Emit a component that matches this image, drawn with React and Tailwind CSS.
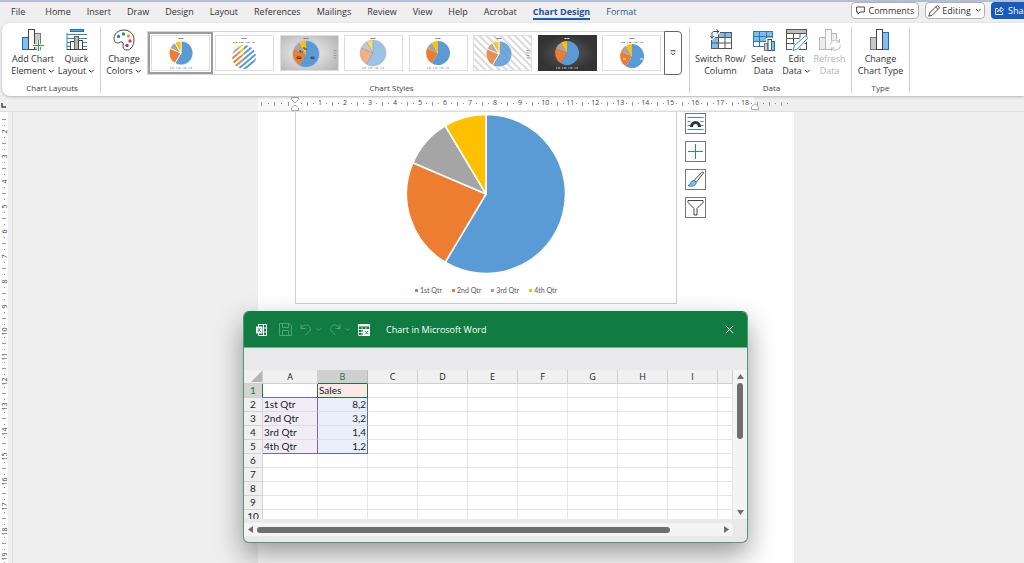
import clsx from "clsx";

const COLORS = ["#5b9bd5", "#ed7d31", "#a5a5a5", "#ffc000"];

const ROWS = [
  { label: "1st Qtr", value: 8.2 },
  { label: "2nd Qtr", value: 3.2 },
  { label: "3rd Qtr", value: 1.4 },
  { label: "4th Qtr", value: 1.2 },
];

const TABS = [
  "File", "Home", "Insert", "Draw", "Design", "Layout", "References",
  "Mailings", "Review", "View", "Help", "Acrobat", "Chart Design", "Format",
];

const COLUMNS = ["A", "B", "C", "D", "E", "F", "G", "H", "I", ""];

function getSlices(cx, cy, r) {
  const total = ROWS.reduce((sum, row) => sum + row.value, 0);
  let angle = 0;
  return ROWS.map((row) => {
    const start = angle;
    angle += (row.value / total) * Math.PI * 2;
    const large = angle - start > Math.PI ? 1 : 0;
    const x1 = cx + r * Math.sin(start);
    const y1 = cy - r * Math.cos(start);
    const x2 = cx + r * Math.sin(angle);
    const y2 = cy - r * Math.cos(angle);
    return `M${cx} ${cy}L${x1} ${y1}A${r} ${r} 0 ${large} 1 ${x2} ${y2}Z`;
  });
}

function Pie({ cx, cy, r, fills = COLORS, stroke = "none", strokeWidth = 1, opacity = 1 }) {
  return getSlices(cx, cy, r).map((d, i) => (
    <path key={i} d={d} fill={fills[i]} stroke={stroke} strokeWidth={strokeWidth} strokeLinejoin="round" opacity={opacity} />
  ));
}

function Chevron() {
  return (
    <svg className="inline-block w-[7px] h-[7px] ml-0.5" viewBox="0 0 7 7" fill="none" stroke="#333" strokeWidth="1">
      <path d="M1 2l2.3 2.3L5.6 2" />
    </svg>
  );
}

/* ---------- Ribbon icons ---------- */

function AddElementIcon() {
  return (
    <svg className="w-[22px] h-[22px]" viewBox="0 0 22 22">
      <rect x="0.5" y="8.5" width="6" height="12" fill="#83beec" stroke="#1e6fb5" />
      <rect x="12.5" y="4.5" width="6" height="16" fill="#c8c8c8" stroke="#7a7a7a" />
      <rect x="6.5" y="0.5" width="6" height="20" fill="#fafafa" stroke="#444" />
      <path d="M16.5 11v11M11 16.5h11" stroke="#fff" strokeWidth="3" />
      <path d="M16.5 11v11M11 16.5h11" stroke="#26a044" strokeWidth="1.2" />
    </svg>
  );
}

function QuickLayoutIcon() {
  return (
    <svg className="w-[22px] h-[22px]" viewBox="0 0 22 22">
      <rect x="4.5" y="0.5" width="13" height="2" fill="#5ba3dc" stroke="#1e6fb5" />
      <path d="M1 5.500h20M1 9.500h20M1 13.500h20M1 17.500h20M1 4v17" stroke="#2f8bb8" fill="none" />
      <rect x="4.5" y="12.5" width="4" height="8" fill="#fff" stroke="#444" />
      <rect x="8.5" y="7.5" width="4" height="13" fill="#b5b5b5" stroke="#666" />
      <rect x="12.5" y="11.5" width="4" height="9" fill="#fff" stroke="#444" />
      <path d="M1 20.500h20" stroke="#444" />
    </svg>
  );
}

function PaletteIcon() {
  return (
    <svg className="w-[22px] h-[22px]" viewBox="0 0 22 22">
      <path
        d="M11 1C5 1 1 5 1 9.500c0 3 1.600 4.500 3.500 4.500 2 0 2.600-1.500 4.300-1 2.400.700 1 3 1.300 5 .200 2 1.700 3 3.900 3 4.200 0 7-5 7-10C21 5 16.500 1 11 1z"
        fill="#fff" stroke="#444" strokeWidth="1"
      />
      <circle cx="5.5" cy="7.5" r="1.7" fill="#2b7fd0" />
      <circle cx="10.5" cy="5" r="1.7" fill="#26a044" />
      <circle cx="15.5" cy="7" r="1.7" fill="#ee9a38" />
      <circle cx="17" cy="12" r="1.7" fill="#d8462e" />
      <circle cx="14" cy="16.5" r="1.7" fill="#7a3fa8" />
    </svg>
  );
}

function SwitchIcon() {
  return (
    <svg className="w-[22px] h-[22px]" viewBox="0 0 22 22">
      <rect x="1.5" y="3.5" width="20" height="16" fill="#fff" stroke="#555" />
      <path d="M8 4h13v4.500H8zM2 8.500h6V19H2z" fill="#7fbdec" />
      <path d="M8.500 3.500v16M15 3.500v16M1.500 8.500h20M1.500 14h20" stroke="#555" fill="none" />
      <path d="M0 0h10v4L2 11H0z" fill="#fff" />
      <path d="M2 9V4.500C2 3.200 2.800 2.500 4 2.500h5M6.500.5l2.500 2-2.500 2.200M.3 7L2 9.300 4 7" stroke="#444" fill="none" />
    </svg>
  );
}

function SelectDataIcon() {
  return (
    <svg className="w-[22px] h-[22px]" viewBox="0 0 22 22">
      <rect x="0.5" y="2.5" width="19" height="15" fill="#7fbdec" stroke="#2f78b4" />
      <path d="M1 13h13v4H1z" fill="#fff" />
      <path d="M6.500 3v15M13.500 3v10M.5 7.500h19M.5 12.500h13" stroke="#2f78b4" />
      <path d="M11 13h2V9h9v13H11z" fill="#fff" />
      <rect x="11.5" y="14.5" width="3.5" height="7" fill="#ccc" stroke="#777" />
      <rect x="15" y="10.5" width="3.5" height="11" fill="#fff" stroke="#444" />
      <rect x="18.5" y="12.5" width="3" height="9" fill="#7fbdec" stroke="#1e6fb5" />
    </svg>
  );
}

function EditDataIcon() {
  return (
    <svg className="w-[22px] h-[22px]" viewBox="0 0 22 22">
      <rect x="0.5" y="0.5" width="20" height="20" fill="#fff" stroke="#555" />
      <rect x="1" y="1" width="19" height="3" fill="#bdbdbd" />
      <path d="M.5 4.500h20M.5 9.500h20M.5 14.500h20M7.500 4.500v16M14 4.500v16" stroke="#555" fill="none" />
      <path d="M7 21.500l1.500-5L18.500 6.500l3.200 3.200L11.500 20z" fill="#fff" stroke="#fff" strokeWidth="2.5" />
      <path d="M7 21.500l1.500-5L19 7.200c1-.8 3.200 1.200 2.300 2.500L11.500 20z" fill="#fff" stroke="#3190d4" />
    </svg>
  );
}

function RefreshIcon() {
  return (
    <svg className="w-[22px] h-[22px]" viewBox="0 0 22 22" stroke="#b8b8b8">
      <rect x="0.5" y="8.5" width="6" height="12" fill="#ececec" />
      <rect x="12.5" y="4.5" width="5" height="13" fill="#ececec" />
      <rect x="6.5" y="0.5" width="6" height="20" fill="#f8f8f8" />
      <circle cx="16.5" cy="16" r="6" fill="#fff" stroke="none" />
      <path d="M11.500 15.500a5 5 0 0 1 9-2.500v-3M20.500 13h-3M21.500 16.500a5 5 0 0 1-9 2.700v3M12.500 19h3" fill="none" />
    </svg>
  );
}

function ChartTypeIcon() {
  return (
    <svg className="w-[22px] h-[22px]" viewBox="0 0 22 22">
      <rect x="1.5" y="8.5" width="6" height="12" fill="#c8c8c8" stroke="#777" />
      <rect x="13.5" y="3.5" width="6" height="17" fill="#83beec" stroke="#1e6fb5" />
      <rect x="7.5" y="0.5" width="6" height="20" fill="#fff" stroke="#444" />
    </svg>
  );
}

function RibbonButton({ icon, lines, menu, disabled, className }) {
  return (
    <button
      type="button"
      disabled={disabled}
      className={clsx("flex flex-col items-center shrink-0 text-[9px] leading-3 whitespace-nowrap", disabled ? "text-[#b4b4b4]" : "text-[#333]", className)}
    >
      <span className="h-6">{icon}</span>
      <span>{lines[0]}</span>
      <span>
        {lines[1]}
        {menu && <Chevron />}
      </span>
    </button>
  );
}

function RibbonGroup({ label, children, className }) {
  return (
    <section className={clsx("flex flex-col shrink-0 border-r border-[#cfcfcf] mt-1 mb-[3px] pt-0.5", className)}>
      <div className="flex flex-1 justify-center">{children}</div>
      <h2 className="text-[8px] leading-[10px] text-center text-[#444]">{label}</h2>
    </section>
  );
}

/* ---------- Chart style gallery ---------- */

const STYLES = [
  { cx: 30, cy: 18, r: 12, stroke: "#fff", legend: "bottom" },
  { cx: 29, cy: 22, r: 12, fills: ["url(#hBlue)", "url(#hOrange)", "url(#hGray)", "url(#hGold)"], legend: "top" },
  { cx: 26, cy: 19, r: 14, bg: "url(#silver)", legend: "right", halo: true },
  { cx: 29, cy: 18, r: 13, opacity: 0.6, outline: true, legend: "bottom" },
  { cx: 29, cy: 18, r: 12, legend: "bottom" },
  { cx: 26, cy: 19, r: 13, bg: "url(#stripes)", stroke: "#fff", opacity: 0.85, legend: "right" },
  { cx: 29, cy: 18, r: 12, bg: "url(#dark)", legend: "bottom", dark: true },
  { cx: 30, cy: 21, r: 12, legend: "top", ticks: true },
];

function GalleryDefs() {
  return (
    <svg className="absolute w-0 h-0" aria-hidden="true">
      <defs>
        {[["hBlue", "#5b9bd5"], ["hOrange", "#ed7d31"], ["hGray", "#a5a5a5"], ["hGold", "#ffc000"]].map(([id, color]) => (
          <pattern key={id} id={id} width="4" height="4" patternUnits="userSpaceOnUse" patternTransform="rotate(-40)">
            <rect width="4" height="4" fill="#fff" />
            <rect width="4" height="2" fill={color} />
          </pattern>
        ))}
        <pattern id="stripes" width="5" height="5" patternUnits="userSpaceOnUse" patternTransform="rotate(45)">
          <rect width="5" height="5" fill="#fff" />
          <rect width="5" height="2" fill="#d9d9d9" />
        </pattern>
        <radialGradient id="silver" cx="0.45" cy="0.5" r="0.65">
          <stop offset="0" stopColor="#f4f4f4" />
          <stop offset="1" stopColor="#b8b8b8" />
        </radialGradient>
        <radialGradient id="dark">
          <stop offset="0" stopColor="#5c5c5c" />
          <stop offset="1" stopColor="#333" />
        </radialGradient>
      </defs>
    </svg>
  );
}

function StyleThumb({ cx, cy, r, fills, bg = "#fff", stroke, opacity, outline, halo, legend, dark, ticks }) {
  const ink = dark ? "#ccc" : "#999";
  return (
    <svg className="w-[59px] h-[36px]" viewBox="0 0 59 36">
      <rect x="0.5" y="0.5" width="58" height="35" fill={bg} stroke={dark ? "#333" : "#dedede"} />
      <path d={`M${cx - 2.5} 3.500h5`} stroke={dark ? "#eee" : "#777"} strokeDasharray="1.5 .3" />
      {halo && <circle cx={cx} cy={cy} r={r} fill="#b5cde6" />}
      <Pie cx={cx} cy={cy} r={halo ? r - 1 : r} fills={fills} stroke={outline ? "#4f86c6" : stroke} strokeWidth={outline ? 0.5 : 0.8} opacity={opacity} />
      {halo && <path d="M17 22h4v1.500h-4zM31 22h3v1.500h-3zM20 15v2h3M24 12v2h3" fill="none" stroke="#444" strokeWidth="1" />}
      {ticks && <path d={`M${cx - 9} ${cy + 3}h3M${cx + 8} ${cy + 3}h3`} stroke="#fff" strokeWidth="1" />}
      {legend === "bottom" && <path d={`M${cx - 11} 33h22`} stroke={ink} strokeDasharray="1 .7 2.5 2" />}
      {legend === "top" && <path d={`M${cx - 11} 7.500h22`} stroke={ink} strokeDasharray="1 .7 2.5 2" />}
      {legend === "right" && <path d="M55 15v10" stroke={ink} strokeWidth="3" strokeDasharray="1 1.5" />}
    </svg>
  );
}

function StyleGallery() {
  return (
    <div className="flex h-[44px] mt-0.5">
      <GalleryDefs />
      <div className="grid grid-cols-8 w-[517px] border-y border-l border-[#d4d4d4]">
        {STYLES.map((style, i) => (
          <button
            key={i}
            type="button"
            aria-label={`Style ${i + 1}`}
            className={clsx("flex items-center justify-center", i === 0 && "border-2 border-[#9c9c9c]")}
          >
            <StyleThumb {...style} />
          </button>
        ))}
      </div>
      <button type="button" aria-label="More styles" className="flex items-center justify-center w-[18px] border border-[#666] rounded-r">
        <svg className="w-[6px] h-[6px]" viewBox="0 0 6 6" fill="none" stroke="#333">
          <path d="M.5 .8h5M1 2.800l2 2 2-2" />
        </svg>
      </button>
    </div>
  );
}

function Ribbon() {
  return (
    <div className="relative z-10 flex h-[73px] ml-0.5 pl-1.5 shrink-0 bg-white rounded-l-lg shadow-[0_1px_3px_rgba(0,0,0,0.25)]">
      <RibbonGroup label="Chart Layouts" className="w-[93px] pr-1">
        <RibbonButton className="w-[49px]" icon={<AddElementIcon />} lines={["Add Chart", "Element"]} menu />
        <RibbonButton className="w-[38px]" icon={<QuickLayoutIcon />} lines={["Quick", "Layout"]} menu />
      </RibbonGroup>
      <RibbonGroup label="Chart Styles" className="w-[589px] pr-[7px]">
        <RibbonButton className="w-[46px]" icon={<PaletteIcon />} lines={["Change", "Colors"]} menu />
        <StyleGallery />
      </RibbonGroup>
      <RibbonGroup label="Data" className="w-[162px] pl-0.5">
        <RibbonButton className="w-[50px]" icon={<SwitchIcon />} lines={["Switch Row/", "Column"]} />
        <RibbonButton className="w-[36px]" icon={<SelectDataIcon />} lines={["Select", "Data"]} />
        <RibbonButton className="w-[30px]" icon={<EditDataIcon />} lines={["Edit", "Data"]} menu />
        <RibbonButton className="w-[36px]" icon={<RefreshIcon />} lines={["Refresh", "Data"]} disabled />
      </RibbonGroup>
      <RibbonGroup label="Type" className="w-[58px]">
        <RibbonButton icon={<ChartTypeIcon />} lines={["Change", "Chart Type"]} />
      </RibbonGroup>
    </div>
  );
}

function MenuBar() {
  return (
    <header className="flex items-center h-[23px] shrink-0 border-t-2 border-[#b3bfd6] text-[9px] text-[#333]">
      <nav className="flex items-center gap-4 pl-[11px] whitespace-nowrap">
        {TABS.map((tab) => (
          <a
            key={tab}
            href="#"
            className={clsx(
              "leading-3 border-b-2",
              tab === "File" && "mr-1",
              tab === "Chart Design" ? "font-bold text-[#1f4e9e] border-[#185abd]" : "border-transparent",
              tab === "Format" && "text-[#2b5797]"
            )}
          >
            {tab}
          </a>
        ))}
      </nav>
      <div className="flex gap-1.5 ml-auto h-[17px] mb-1 whitespace-nowrap">
        <button type="button" className="flex items-center gap-1 px-1 bg-white border border-[#b0b0b0] rounded">
          <svg className="w-[9px] h-[9px]" viewBox="0 0 9 9" fill="none" stroke="#333" strokeWidth="0.9">
            <path d="M.6 1h7.800v5H4L2 8.200V6H.6z" />
          </svg>
          Comments
        </button>
        <button type="button" className="flex items-center gap-0.5 px-0.5 bg-white border border-[#b0b0b0] rounded">
          <svg className="w-3 h-3" viewBox="0 0 12 12" fill="none" stroke="#333" strokeWidth="0.9">
            <path d="M.8 11.200l.9-3.300L8.700.9c.8-.8 3.200 1.500 2.400 2.400L4.100 10.300zM7.700 2l2.300 2.300" />
          </svg>
          Editing
          <Chevron />
        </button>
        <button type="button" className="flex items-center gap-1 w-[33px] pl-1 overflow-hidden text-white bg-[#185abd] rounded-l">
          <svg className="w-[9px] h-[9px] shrink-0" viewBox="0 0 9 9" fill="none" stroke="#fff" strokeWidth="0.9">
            <path d="M3 2.500H.6v6h7V6.500M2.500 6c.3-2 1.300-3 3.300-3V1.200L8.500 3.700 5.800 6V4.500c-1.500 0-2.500.4-3.300 1.500z" />
          </svg>
          Share
        </button>
      </div>
    </header>
  );
}

/* ---------- Rulers ---------- */

function Mark({ kind, children }) {
  return (
    <span className="flex flex-1 min-w-0 min-h-0 items-center justify-center">
      {kind === "dot" && <i className="block w-px h-px shrink-0 bg-[#888]" />}
      {kind === "tick" && <i className="block w-px h-1 shrink-0 bg-[#999]" />}
      {kind === "dash" && <i className="block w-1 h-px shrink-0 bg-[#999]" />}
      {children}
    </span>
  );
}

function HorizontalRuler() {
  return (
    <div className="flex justify-center h-4 pl-7 shrink-0 border-b border-[#dcdcdc] text-[7px] text-[#444]">
      <div className="relative flex w-[536px] shrink-0 my-px">
        <div className="flex w-[34px] bg-[#f7f7f7]">
          {["tick", "dot", "tick", "dot", "tick"].map((kind, i) => <Mark key={i} kind={kind} />)}
        </div>
        {Array.from({ length: 18 }, (_, n) => (
          <div key={n} className="flex w-[25px] bg-white">
            <Mark>{n > 0 && n}</Mark>
            <Mark kind="dot" />
            <Mark kind="tick" />
            <Mark kind="dot" />
          </div>
        ))}
        <div className="flex w-[12px] bg-white">
          <Mark>18</Mark>
          <Mark kind="dot" />
        </div>
        <div className="flex flex-1 pr-[3px]">
          {["tick", "dot", "tick", "dot", "tick", "dot"].map((kind, i) => <Mark key={i} kind={kind} />)}
        </div>
        <svg className="absolute left-8 top-0 w-[10px] h-[14px]" viewBox="0 0 10 14" fill="#fff" stroke="#aaa">
          <path d="M1.500 .5h7v2L5 6 1.500 2.500zM5 8l3.500 3v2.500h-7V11z" />
        </svg>
        <svg className="absolute left-[492px] bottom-0 w-[10px] h-[7px]" viewBox="0 0 10 7" fill="#fff" stroke="#aaa">
          <path d="M5 .8l3.500 3v2.700h-7V3.800z" />
        </svg>
      </div>
    </div>
  );
}

function VerticalRuler() {
  return (
    <div className="flex w-[13px] shrink-0 border-r border-[#dcdcdc] overflow-hidden text-[7px] text-[#444]">
      <div className="w-2 bg-white">
        <div className="flex flex-col h-4 pt-1">
          <Mark kind="dash" />
          <Mark kind="dot" />
        </div>
        {Array.from({ length: 18 }, (_, i) => (
          <div key={i} className="flex flex-col h-[25px]">
            <Mark>
              <span className="-rotate-90 leading-none">{i + 2}</span>
            </Mark>
            <Mark kind="dot" />
            <Mark kind="dash" />
            <Mark kind="dot" />
          </div>
        ))}
      </div>
    </div>
  );
}

/* ---------- Document ---------- */

function ChartFrame() {
  return (
    <figure className="flex flex-col items-center w-[382px] h-[192px] pt-0.5 border border-t-0 border-[#cfcfcf]">
      <svg className="w-[160px] h-[160px]" viewBox="0 0 160 160" role="img" aria-label="Sales">
        <Pie cx={80} cy={80} r={79.5} stroke="#fff" strokeWidth={1.5} />
      </svg>
      <ul className="flex gap-2.5 mt-3 text-[7px] leading-[9px] text-[#555] font-[Lato,sans-serif]">
        {ROWS.map((row, i) => (
          <li key={row.label} className="flex items-center gap-0.5">
            <i className="block w-[3px] h-[3px]" style={{ background: COLORS[i] }} />
            {row.label}
          </li>
        ))}
      </ul>
    </figure>
  );
}

function SideButton({ label, children }) {
  return (
    <button type="button" aria-label={label} className="flex items-center justify-center w-[21px] h-[21px] bg-white border border-[#777]">
      <svg className="w-[19px] h-[19px]" viewBox="0 0 19 19" fill="none">{children}</svg>
    </button>
  );
}

function ChartTools() {
  return (
    <div className="flex flex-col gap-[7px] pt-px">
      <SideButton label="Layout options">
        <path d="M1.500 3.500h16M1.500 15.500h16M1.500 7.500h3M14.500 7.500h3M1.500 11.500h3M14.500 11.500h3" stroke="#3190c8" />
        <path d="M5.500 13c0-6 8-6 8 0" stroke="#333" strokeWidth="3" />
      </SideButton>
      <SideButton label="Chart elements">
        <path d="M9.500 2v15M2 9.500h15" stroke="#26994a" strokeWidth="1" />
      </SideButton>
      <SideButton label="Chart styles">
        <path d="M8 10.500L16 2.200c1-.8 1.800.2 1.200 1.200L10.500 12z" stroke="#444" fill="#fff" />
        <path d="M2 15.500c2.500-.3 2-4 5-4.800 2-.4 3.500 1.200 3 2.800-.8 2.700-5 3.500-8 2z" fill="#7cc0f5" stroke="#2072b8" strokeWidth="0.9" />
      </SideButton>
      <SideButton label="Chart filters">
        <path d="M2 2.500h15v2L11 10.500v6.500H8v-6.500L2 4.500z" stroke="#444" />
      </SideButton>
    </div>
  );
}

/* ---------- Data sheet window ---------- */

function TitleBar() {
  return (
    <div className="flex items-center h-9 pl-3 pr-[13px] bg-[#107c41] text-white border-b border-[#6db38e]">
      <svg className="w-[11px] h-[12px]" viewBox="0 0 11 12" fill="none">
        <path d="M2.500.5h8v11h-8zM7.500.5v11M7.500 4h3M7.500 8h3" stroke="#fff" />
        <rect x="0" y="2.5" width="6.5" height="7" fill="#fff" />
        <path d="M1.800 4l2.800 4M4.600 4L1.800 8" stroke="#107c41" strokeWidth="0.8" />
      </svg>
      <div className="flex items-center ml-3 text-[#4fa577]">
        <button type="button" aria-label="Save" disabled>
          <svg className="w-[13px] h-[13px]" viewBox="0 0 13 13" fill="none" stroke="currentColor">
            <path d="M.5.5h10l2 2v10H.5zM3.500.5v4h6v-4M3.500 12.500v-5h6v5" />
          </svg>
        </button>
        <button type="button" aria-label="Undo" disabled className="flex items-center gap-1 ml-2">
          <svg className="w-3 h-[13px]" viewBox="0 0 12 13" fill="none" stroke="currentColor">
            <path d="M1 1v4.500h4.500M1 5.500C3.500 1.500 7 1.200 9 3c2 2 1.500 4.300 0 5.700L5.500 12.200" />
          </svg>
          <svg className="w-[5px] h-[3px]" viewBox="0 0 5 3" fill="none" stroke="currentColor"><path d="M.5.3l2 2 2-2" /></svg>
        </button>
        <button type="button" aria-label="Redo" disabled className="flex items-center gap-1 ml-2">
          <svg className="w-3 h-[13px]" viewBox="0 0 12 13" fill="none" stroke="currentColor">
            <path d="M11 1v4.500H6.500M11 5.500C8.500 1.500 5 1.200 3 3 1 5 1.500 7.300 3 8.700l3.500 3.500" />
          </svg>
          <svg className="w-[5px] h-[3px]" viewBox="0 0 5 3" fill="none" stroke="currentColor"><path d="M.5.3l2 2 2-2" /></svg>
        </button>
      </div>
      <button type="button" aria-label="Edit data in Excel" className="ml-2">
        <svg className="w-[12px] h-[12px]" viewBox="0 0 12 12" fill="none">
          <path d="M.5.5h11v11H.5zM.5 5.500h11M.5 8.500h6M4 3v8.500M8 3v4" stroke="#fff" strokeWidth="0.8" />
          <path d="M0 0h12v2.500H0z" fill="#fff" opacity="0.9" />
          <rect x="5" y="5" width="7" height="7" fill="#fff" />
          <path d="M7 6.800l3 3.600M10 6.800l-3 3.600" stroke="#107c41" strokeWidth="0.9" />
        </svg>
      </button>
      <span className="ml-4 text-[9px]">Chart in Microsoft Word</span>
      <button type="button" aria-label="Close" className="ml-auto">
        <svg className="w-[9px] h-[9px]" viewBox="0 0 9 9" stroke="#fff"><path d="M.8.8l7.400 7.400M8.200.8L.8 8.200" /></svg>
      </button>
    </div>
  );
}

function cellClass(row, col) {
  if (row === 0 && col === "A") return "border-[#8064a2] border-r-[#217346]";
  if (row === 0 && col === "B") return "bg-[#fbe9e7] border-[#217346]";
  if (row >= 1 && row <= 4 && col === "A") return clsx("bg-[#f1edf7] border-r-[#8064a2]", row === 4 ? "border-b-[#8064a2]" : "border-b-[#e2dcea]");
  if (row >= 1 && row <= 4 && col === "B") return clsx("bg-[#e9effa] border-r-[#4472c4] text-right", row === 4 ? "border-b-[#4472c4]" : "border-b-[#d9e2f0]");
  return "border-[#e6e6e6]";
}

function cellText(row, col) {
  if (row === 0) return col === "B" ? "Sales" : "";
  const data = ROWS[row - 1];
  if (!data) return "";
  if (col === "A") return data.label;
  if (col === "B") return String(data.value).replace(".", ",");
  return "";
}

function Sheet() {
  return (
    <table className="w-full table-fixed border-separate border-spacing-0 text-[10px] leading-[13px] text-[#222]">
      <colgroup>
        <col className="w-[19px]" />
        <col className="w-[55px]" />
        {COLUMNS.slice(1, 9).map((c) => <col key={c} className="w-[50px]" />)}
        <col />
      </colgroup>
      <thead>
        <tr className="h-[14px] bg-[#f0f0f0] text-[9px]">
          <th className="p-0 border-r border-b border-[#cfcfcf]">
            <svg className="w-[11px] h-[11px] ml-auto" viewBox="0 0 11 11"><path d="M11 0v11H0z" fill="#b4b4b4" /></svg>
          </th>
          {COLUMNS.map((c) => (
            <th
              key={c}
              scope="col"
              className={clsx("p-0 font-normal border-r border-b", c === "B" ? "bg-[#cfcfcf] text-[#217346] border-[#217346] border-r-[#bbb]" : "border-[#cfcfcf]")}
            >
              {c}
            </th>
          ))}
        </tr>
      </thead>
      <tbody className="font-[Lato,sans-serif]">
        {Array.from({ length: 10 }, (_, row) => (
          <tr key={row} className="h-[14px] bg-white">
            <th
              scope="row"
              className={clsx("p-0 font-normal border-r border-b", row === 0 ? "bg-[#d4d4d4] text-[#217346] border-[#cfcfcf] border-r-[#217346]" : "bg-[#f0f0f0] border-[#d4d4d4]")}
            >
              {row + 1}
            </th>
            {COLUMNS.map((col) => (
              <td key={col} className={clsx("p-0 px-px border-r border-b whitespace-nowrap", cellClass(row, col))}>
                {cellText(row, col)}
              </td>
            ))}
          </tr>
        ))}
      </tbody>
    </table>
  );
}

function DataWindow() {
  return (
    <div className="absolute -left-[15px] top-[199px] w-[505px] h-[232px] flex flex-col overflow-hidden bg-[#e9e9eb] border border-[#4c9a73] border-t-[#107c41] rounded-md shadow-[0_12px_28px_rgba(0,0,0,0.4)]">
      <TitleBar />
      <div className="h-[22px] shrink-0" />
      <div className="flex h-[149px] shrink-0">
        <div className="flex-1 overflow-hidden">
          <Sheet />
        </div>
        <div className="flex flex-col items-center w-[14px] py-1 bg-[#f4f4f4]">
          <svg className="w-[7px] h-[5px]" viewBox="0 0 7 5"><path d="M3.500 0L7 5H0z" fill="#6e6e6e" /></svg>
          <div className="w-1.5 h-14 mt-1 rounded-full bg-[#6e6e6e]" />
          <svg className="w-[7px] h-[5px] mt-auto" viewBox="0 0 7 5"><path d="M0 0h7L3.500 5z" fill="#6e6e6e" /></svg>
        </div>
      </div>
      <div className="flex items-center h-[13px] mt-1 mr-[14px] px-1 rounded-r bg-[#f4f4f4]">
        <svg className="w-[5px] h-[7px]" viewBox="0 0 5 7"><path d="M5 0v7L0 3.500z" fill="#6e6e6e" /></svg>
        <div className="w-[413px] h-1.5 ml-1 rounded-full bg-[#6e6e6e]" />
        <svg className="w-[5px] h-[7px] ml-auto" viewBox="0 0 5 7"><path d="M0 0v7l5-3.500z" fill="#6e6e6e" /></svg>
      </div>
    </div>
  );
}

export default function App() {
  return (
    <div className="flex flex-col h-screen overflow-hidden bg-[#efefef] font-['Open_Sans',sans-serif]">
      <MenuBar />
      <Ribbon />
      <div className="relative">
        <HorizontalRuler />
        <svg className="absolute left-px top-[7px] w-[5px] h-[5px]" viewBox="0 0 5 5"><path d="M1 0v4h4" fill="none" stroke="#444" strokeWidth="1.5" /></svg>
      </div>
      <main className="flex flex-1 min-h-0">
        <VerticalRuler />
        <div className="flex flex-1 justify-center pl-[15px]">
          <article className="relative flex items-start gap-2 w-[536px] shrink-0 pl-[37px] bg-white">
            <ChartFrame />
            <ChartTools />
            <DataWindow />
          </article>
        </div>
      </main>
    </div>
  );
}
